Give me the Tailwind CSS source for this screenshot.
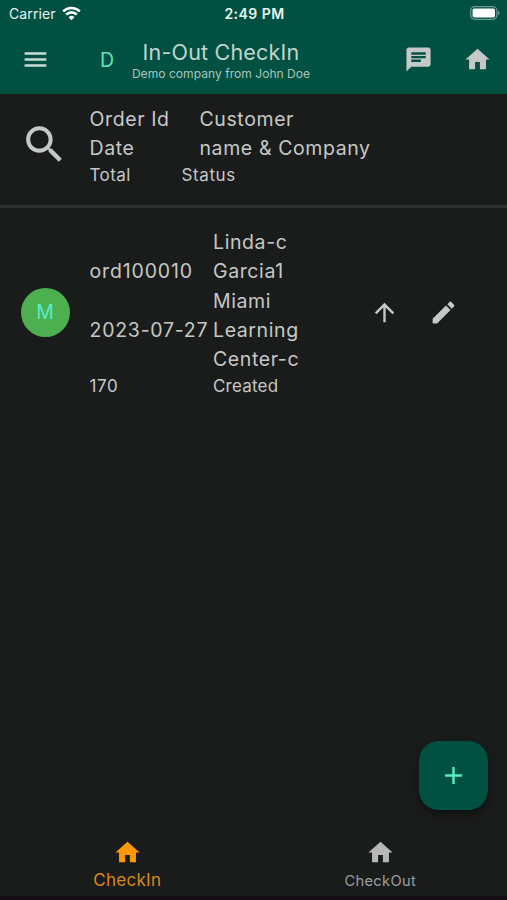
<!DOCTYPE html>
<html lang="en">
  <head>
    <meta charset="UTF-8" />
    <meta name="viewport" content="width=device-width, initial-scale=1.0" />
    <title>In-Out CheckIn</title>
    <script src="https://cdn.jsdelivr.net/npm/@tailwindcss/browser@4"></script>
  </head>
  <body class="w-[507px] h-[900px] overflow-hidden flex flex-col bg-[#1a1c1b] text-[#c5c8c6] font-[Inter,sans-serif]">
    <!-- Header -->
    <header class="h-[94px] shrink-0 bg-[#005142]">
      <!-- Status bar -->
      <div class="h-[26px] grid grid-cols-3 items-center pl-[9px] pr-[7px] text-[#e8f3f0]">
        <div class="flex items-center gap-[6px]">
          <span class="text-[14px] leading-none tracking-[0.1px] pt-[2px]">Carrier</span>
          <svg class="w-[19px] h-[15px]" viewBox="0 0 19 15" fill="none" stroke="#fff" stroke-width="2.6">
            <path d="M1.2 5.4a11.7 11.7 0 0 1 16.6 0M4.2 8.6a7.5 7.5 0 0 1 10.6 0" />
            <path d="M9.5 14.2 6.6 11.2a4.1 4.1 0 0 1 5.8 0z" fill="#fff" stroke="none" />
          </svg>
        </div>
        <div class="text-center text-[14px] leading-none font-semibold tracking-[0.45px] pt-[2px]">2:49 PM</div>
        <svg class="justify-self-end w-[30px] h-[14px]" viewBox="0 0 30 14">
          <rect x="0.7" y="0.7" width="26.2" height="12.6" rx="4" fill="none" stroke="#6f9c92" stroke-width="1.2" />
          <rect x="2.6" y="2.5" width="22.4" height="9" rx="1.8" fill="#fff" />
          <path d="M28 4.8c2 .8 2 3.6 0 4.4z" fill="#6f9c92" />
        </svg>
      </div>
      <!-- App bar -->
      <div class="h-[68px] flex items-center pb-[2px]">
        <svg class="w-[29px] h-[29px] ml-[21px]" viewBox="0 0 24 24" fill="#c9dcd6"><path d="M3 18h18v-2H3v2zm0-5h18v-2H3v2zm0-7v2h18V6H3z" /></svg>
        <span class="w-[15px] ml-[50px] pt-[3px] text-[19.5px] leading-none text-[#58e6c2]">D</span>
        <div class="w-[180px] ml-[16px] pt-[3px] flex flex-col items-center whitespace-nowrap">
          <h1 class="text-[21.5px] leading-[26px] tracking-[0.2px] text-[#c2d3ce]">In-Out CheckIn</h1>
          <p class="text-[12.1px] leading-[17px] text-[#a9c4bc]">Demo company from John Doe</p>
        </div>
        <svg class="w-[29px] h-[29px] ml-[93px]" viewBox="0 0 24 24" fill="#c5c8c6"><path d="M20 2H4c-1.1 0-1.99.9-1.99 2L2 22l4-4h14c1.1 0 2-.9 2-2V4c0-1.1-.9-2-2-2zM6 9h12v2H6V9zm8 5H6v-2h8v2zm4-6H6V6h12v2z" /></svg>
        <svg class="w-[29px] h-[29px] ml-[30px]" viewBox="0 0 24 24" fill="#c5c8c6"><path d="M10 20v-6h4v6h5v-8h3L12 3 2 12h3v8z" /></svg>
      </div>
    </header>

    <!-- Column titles -->
    <section class="h-[114px] shrink-0 flex border-b-3 border-[#2d302f] text-[19.5px] leading-[29.3px] tracking-[0.6px] whitespace-nowrap">
      <svg class="w-[49px] h-[49px] ml-[20px] mt-[26px]" viewBox="0 0 24 24" fill="#c5c8c6"><path d="M15.5 14h-.79l-.28-.27C15.41 12.59 16 11.11 16 9.5 16 5.91 13.09 3 9.5 3S3 5.91 3 9.5 5.91 16 9.5 16c1.61 0 3.09-.59 4.23-1.57l.27.28v.79l5 4.99L20.49 19l-4.99-5zm-6 0C7.01 14 5 11.99 5 9.5S7.01 5 9.5 5 14 7.01 14 9.5 11.99 14 9.5 14z" /></svg>
      <div class="ml-[20.5px] pt-[11px]">
        <div class="flex">
          <div class="w-[110px]">Order Id<br />Date</div>
          <div>Customer<br />name &amp; Company</div>
        </div>
        <div class="flex text-[17px] leading-[22px]">
          <div class="w-[92px] tracking-[0.4px]">Total</div>
          <div>Status</div>
        </div>
      </div>
    </section>

    <!-- Orders -->
    <main class="grow flex flex-col">
      <div class="flex pt-[20px] text-[19.5px] leading-[29.3px] tracking-[0.6px] whitespace-nowrap">
        <div class="w-[49px] h-[49px] ml-[20.5px] mt-[60px] pt-[1px] rounded-full bg-[#4caf50] text-[#58ecc8] flex items-center justify-center tracking-normal">M</div>
        <div class="ml-[20px] w-[123.5px] flex flex-col">
          <div class="pt-[29.3px] tracking-[0.85px]">ord100010</div>
          <div class="pt-[29.3px] tracking-[0.75px]">2023-07-27</div>
          <div class="pt-[29.3px] text-[17px] leading-[24px]">170</div>
        </div>
        <div class="w-[147px]">
          <div>Linda-c<br />Garcia1<br />Miami<br />Learning<br />Center-c</div>
          <div class="text-[17px] leading-[24px] tracking-[0.2px]">Created</div>
        </div>
        <svg class="w-[29px] h-[29px] ml-[10px] mt-[70px]" viewBox="0 0 24 24" fill="#c5c8c6"><path d="M4 12l1.41 1.41L11 7.83V20h2V7.83l5.58 5.59L20 12l-8-8-8 8z" /></svg>
        <svg class="w-[29px] h-[29px] ml-[30px] mt-[70px]" viewBox="0 0 24 24" fill="#c5c8c6"><path d="M3 17.25V21h3.75L17.81 9.94l-3.75-3.75L3 17.25zM20.71 7.04c.39-.39.39-1.02 0-1.41l-2.34-2.34c-.39-.39-1.02-.39-1.41 0l-1.83 1.83 3.75 3.75 1.83-1.83z" /></svg>
      </div>
      <button class="mt-auto mb-[16px] mr-[19.5px] self-end w-[69px] h-[69px] rounded-[20px] bg-[#005142] shadow-[0_5px_9px_rgba(0,0,0,0.4)] flex items-center justify-center">
        <svg class="w-[29px] h-[29px]" viewBox="0 0 24 24" fill="#58ecc8"><path d="M19 13h-6v6h-2v-6H5v-2h6V5h2v6h6v2z" /></svg>
      </button>
    </main>

    <!-- Bottom tabs -->
    <nav class="h-[70px] shrink-0 grid grid-cols-2">
      <a class="flex flex-col items-center pt-[12px] pl-[1px] text-[#d98a16]">
        <svg class="w-[29px] h-[29px]" viewBox="0 0 24 24" fill="#ff9800"><path d="M10 20v-6h4v6h5v-8h3L12 3 2 12h3v8z" /></svg>
        <span class="text-[17px] leading-[24px] tracking-[0.3px] mt-[1px]">CheckIn</span>
      </a>
      <a class="flex flex-col items-center pt-[12px] text-[#9a9d9b]">
        <svg class="w-[29px] h-[29px]" viewBox="0 0 24 24" fill="#b6b8b7"><path d="M10 20v-6h4v6h5v-8h3L12 3 2 12h3v8z" /></svg>
        <span class="text-[14.7px] leading-[24px] tracking-[0.3px] mt-[2px]">CheckOut</span>
      </a>
    </nav>
    <div class="h-[4px] shrink-0 bg-[#170d14]"></div>
  </body>
</html>
